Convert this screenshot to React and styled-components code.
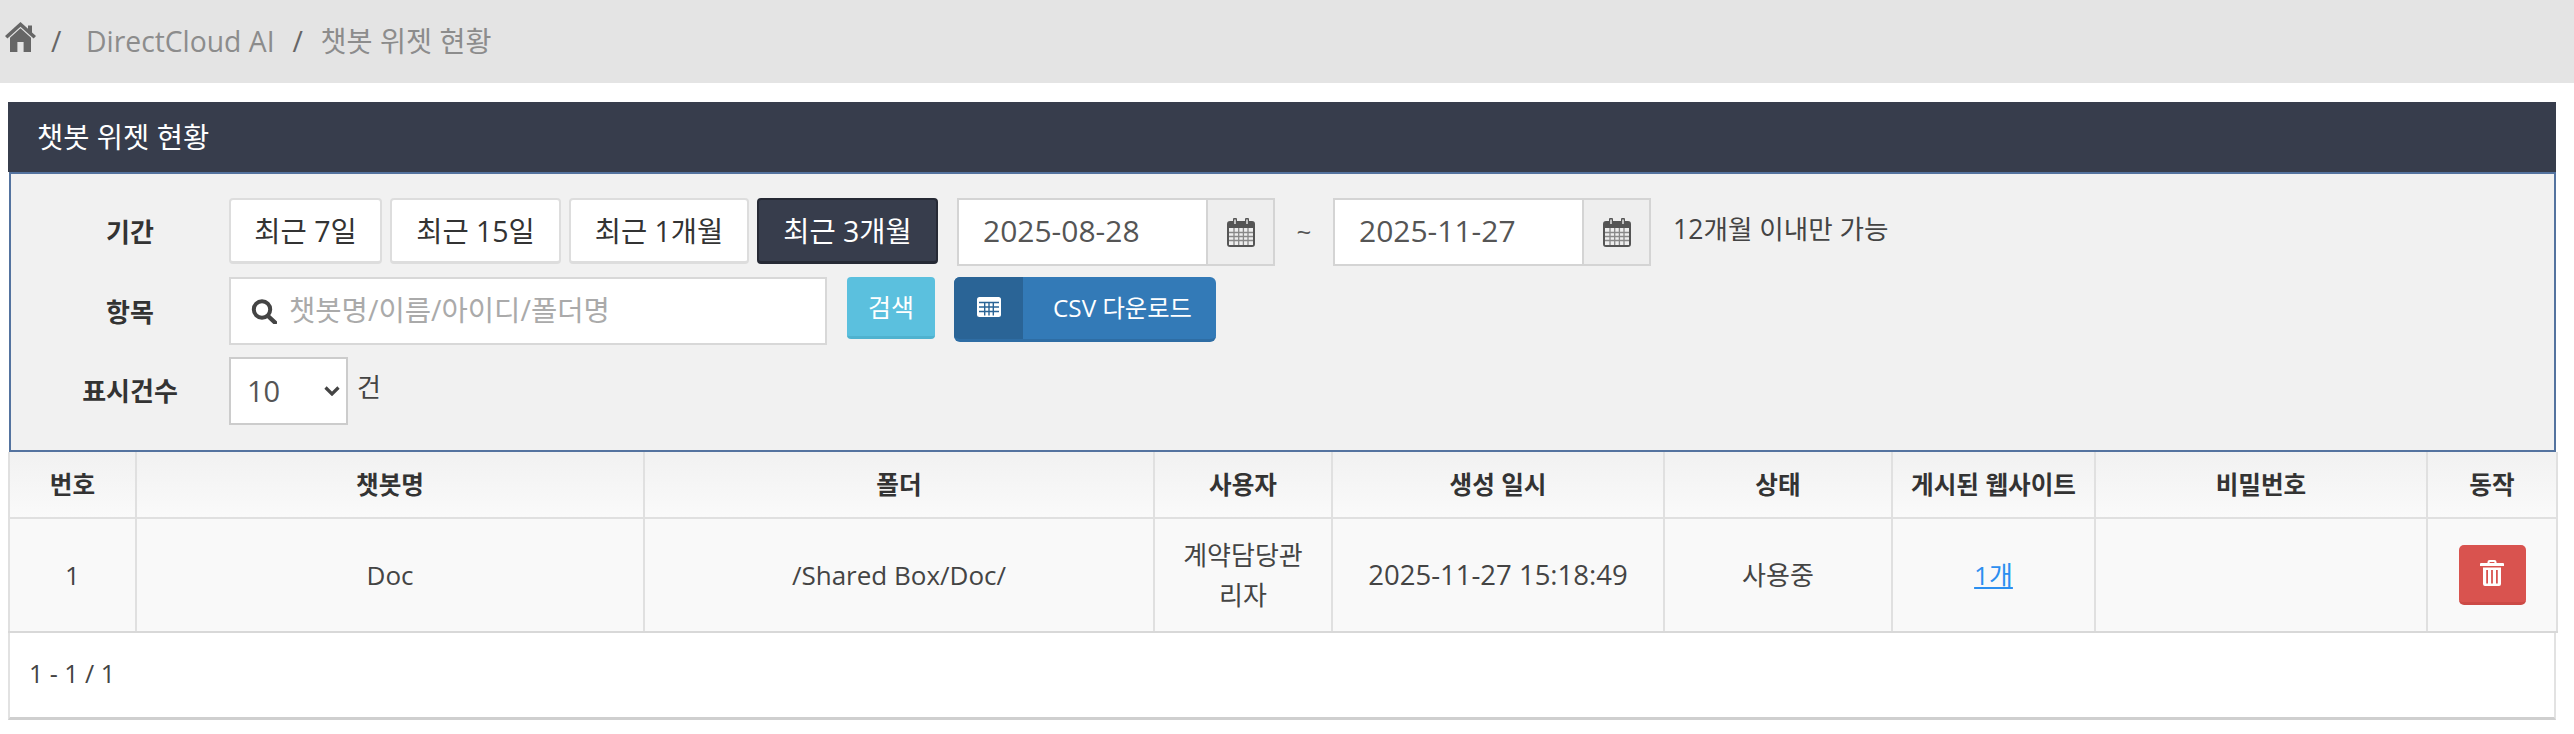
import React from "react";
import styled, { createGlobalStyle } from "styled-components";

const Global = createGlobalStyle`
  html, body { margin: 0; padding: 0; background: #fff; }
  body {
    font-family: "Open Sans", "Noto Sans CJK KR", sans-serif;
    font-size: 26px;
    line-height: 40px;
    color: #333;
  }
  * { box-sizing: border-box; }
`;

const Breadcrumb = styled.nav`
  display: flex;
  align-items: center;
  height: 83px;
  padding: 0 0 1px 5px;
  background: #e4e4e4;
  font-size: 28.3px;
  color: #8c8c8c;
`;
const HomeLink = styled.span`
  display: flex;
  width: 31px;
  margin-top: -8px;
  margin-right: 15px;
  color: #666;
`;
const Crumb = styled.span`
  color: #8c8c8c;
`;
const Slash = styled.span`
  width: 10px;
  margin: ${(p) => (p.$first ? "0 25px 0 0" : "0 18px 0 18px")};
  color: #666;
`;

const Panel = styled.section`
  margin: 19px 18px 0 8px;
`;
const PanelTitle = styled.h2`
  display: flex;
  align-items: center;
  height: 70px;
  margin: 0;
  padding: 0 0 0 29px;
  background: #373d4c;
  color: #fff;
  font-size: 28.5px;
  font-weight: 400;
`;
const SearchForm = styled.form`
  display: grid;
  grid-template-columns: 200px 1fr;
  grid-template-rows: 68px 69px 68px;
  row-gap: 11px;
  align-items: start;
  height: 280px;
  margin-left: 1px;
  padding: 24px 0 0 18px;
  background: #f1f1f1;
  border: 2px solid #54739f;
`;
const FieldLabel = styled.label`
  align-self: center;
  padding-left: 2px;
  text-align: center;
  font-size: 26px;
  font-weight: 700;
  color: #333;
`;
const Controls = styled.div`
  display: flex;
  align-items: flex-start;
`;
const RangeButton = styled.button`
  height: 66px;
  margin-right: ${(p) => p.$mr ?? 7}px;
  padding: 0;
  width: ${(p) => p.$w}px;
  font: inherit;
  font-size: 28.5px;
  color: ${(p) => (p.$active ? "#fff" : "#333")};
  background: ${(p) => (p.$active ? "#373d4c" : "#fff")};
  border: 2px solid ${(p) => (p.$active ? "#262a35" : "#ddd")};
  border-bottom-width: 3px;
  border-radius: 4px;
`;
const DateGroup = styled.div`
  display: flex;
  width: 318px;
  height: 68px;
  border: 2px solid #d4d4d4;
  background: #fff;
`;
const DateInput = styled.input`
  flex: 1;
  min-width: 0;
  padding: 0 0 2px 24px;
  border: 0;
  background: transparent;
  font: inherit;
  font-size: 30px;
  color: #555;
  outline: none;
`;
const Addon = styled.span`
  display: flex;
  align-items: center;
  justify-content: center;
  width: 67px;
  color: #555;
  background: #eee;
  border-left: 2px solid #d4d4d4;
`;
const Tilde = styled.span`
  width: 58px;
  line-height: 66px;
  text-align: center;
  font-size: 26px;
  color: #555;
`;
const Hint = styled.span`
  margin-left: 22px;
  line-height: 62px;
  font-size: 26.6px;
  color: #444;
`;
const SearchBox = styled.div`
  display: flex;
  align-items: center;
  width: 598px;
  height: 68px;
  padding-left: 20px;
  margin-right: 20px;
  background: #fff;
  border: 2px solid #d8d8d8;
`;
const SearchInput = styled.input`
  flex: 1;
  min-width: 0;
  margin-left: 12px;
  padding: 0 0 2px;
  border: 0;
  background: transparent;
  font: inherit;
  font-size: 28.6px;
  outline: none;
  &::placeholder { color: #aaa; opacity: 1; }
`;
const SearchButton = styled.button`
  width: 88px;
  height: 62px;
  margin-right: 19px;
  padding: 0;
  font: inherit;
  font-size: 25px;
  color: #fff;
  background: #5bc0de;
  border: 0;
  border-bottom: 3px solid #4fb2cf;
  border-radius: 4px;
`;
const CsvButton = styled.button`
  display: flex;
  align-items: stretch;
  width: 262px;
  height: 65px;
  padding: 0;
  font: inherit;
  font-size: 24.3px;
  color: #fff;
  background: #337ab7;
  border: 0;
  border-bottom: 3px solid #2e6da4;
  border-radius: 6px;
  overflow: hidden;
`;
const CsvIcon = styled.span`
  display: flex;
  align-items: center;
  justify-content: center;
  width: 69px;
  padding-bottom: 3px;
  background: #2a6496;
`;
const CsvLabel = styled.span`
  flex: 1;
  padding-left: 30px;
  text-align: left;
  line-height: 62px;
`;
const SelectWrap = styled.span`
  position: relative;
  display: block;
  width: 119px;
  height: 68px;
`;
const SizeSelect = styled.select`
  appearance: none;
  display: block;
  width: 100%;
  height: 100%;
  padding: 0 0 0 16px;
  font: inherit;
  font-size: 29px;
  color: #555;
  background: #fff;
  border: 2px solid #ccc;
  border-radius: 0;
  outline: none;
`;
const SelectArrow = styled.svg`
  position: absolute;
  top: 29px;
  right: 8px;
  pointer-events: none;
`;
const Unit = styled.span`
  margin-left: 9px;
  line-height: 60px;
  font-size: 26px;
  color: #444;
`;

const Table = styled.table`
  width: 2548px;
  border-collapse: collapse;
  table-layout: fixed;
`;
const Th = styled.th`
  width: ${(p) => p.$w}px;
  height: 66px;
  padding: 0 4px;
  font-size: 24.6px;
  font-weight: 700;
  color: #333;
  text-align: center;
  background: linear-gradient(#f1f1f1, #fafafa);
  border: 2px solid #e0e0e0;
  border-top: 0;
`;
const Td = styled.td`
  height: 112px;
  padding: 16px 20px;
  font-size: 26px;
  text-align: center;
  color: #444;
  background: #f9f9f9;
  border: 2px solid #e0e0e0;
  border-bottom-color: #d8d8d8;
`;
const DateCell = styled(Td)`
  font-size: 27.5px;
  padding: 16px 0;
`;
const CountLink = styled.a`
  color: #2c8ff0;
  text-decoration: underline;
`;
const DeleteButton = styled.button`
  display: inline-flex;
  align-items: center;
  justify-content: center;
  width: 67px;
  height: 60px;
  padding: 0 0 2px;
  vertical-align: middle;
  background: #d9534f;
  border: 0;
  border-bottom: 3px solid #cc4a46;
  border-radius: 5px;
`;
const TableFooter = styled.div`
  display: flex;
  align-items: center;
  width: 2548px;
  height: 87px;
  padding: 0 0 4px 19px;
  font-size: 25px;
  color: #444;
  background: #fff;
  border: 2px solid #e2e2e2;
  border-top: 0;
  border-bottom: 3px solid #cfcfcf;
`;

const HomeIcon = () => (
  <svg width="31" height="30" viewBox="0 0 31 30" fill="currentColor">
    <path d="M15.5 0 L23 6.8 V3.5 H27 V10.4 L31 14 L28.6 16.6 L15.5 4.8 L2.4 16.6 L0 14 Z" />
    <path d="M15.5 6.2 L26 15.8 V30 H18.6 V20 H12.4 V30 H5 V15.8 Z" />
  </svg>
);
const CalendarIcon = () => (
  <svg width="28" height="29" viewBox="0 0 28 29">
    <path fill="#555" fillRule="evenodd" d="M3 3 H6 V1.5 a2 2 0 0 1 4 0 V3 H18 V1.5 a2 2 0 0 1 4 0 V3 H25 a3 3 0 0 1 3 3 V26 a3 3 0 0 1 -3 3 H3 a3 3 0 0 1 -3 -3 V6 a3 3 0 0 1 3 -3 Z M2 10 V27 H26 V10 Z" />
    <path stroke="#888" strokeWidth="1.3" fill="none" d="M2 14.5 H26 M2 18.5 H26 M2 22.5 H26 M7 10 V27 M11.7 10 V27 M16.4 10 V27 M21 10 V27" />
    <path stroke="#eee" strokeWidth="1.4" fill="none" d="M8 1.5 V6 M20 1.5 V6" />
  </svg>
);
const SearchIcon = () => (
  <svg width="26" height="25" viewBox="0 0 26 25" fill="none" stroke="#444">
    <circle cx="11" cy="10.5" r="8.2" strokeWidth="4" />
    <path d="M17 17 L24 23.5" strokeWidth="4.4" strokeLinecap="round" />
  </svg>
);
const TableIcon = () => (
  <svg width="24" height="20" viewBox="0 0 24 20">
    <rect width="24" height="20" rx="2.5" fill="#fff" />
    <path stroke="#2a6496" strokeWidth="1.4" fill="none" d="M2 5.5 H22 M2 10 H22 M2 14.5 H22 M7.7 5.5 V18.5 M12 5.5 V18.5 M16.3 5.5 V18.5" />
  </svg>
);
const TrashIcon = () => (
  <svg width="24" height="26" viewBox="0 0 24 26" fill="#fff">
    <path fillRule="evenodd" d="M7.5 3 V2 a2 2 0 0 1 2 -2 H14.5 a2 2 0 0 1 2 2 V3 H23 a1 1 0 0 1 1 1 V6 H0 V4 a1 1 0 0 1 1 -1 Z M9.6 3 H14.4 V2 H9.6 Z" />
    <path fillRule="evenodd" d="M3 7.5 H21 V24 a2 2 0 0 1 -2 2 H5 a2 2 0 0 1 -2 -2 Z M6.2 10 V23.5 H8 V10 Z M11.1 10 V23.5 H12.9 V10 Z M16 10 V23.5 H17.8 V10 Z" />
  </svg>
);

const ranges = [
  { label: "최근 7일", w: 153 },
  { label: "최근 15일", w: 171 },
  { label: "최근 1개월", w: 180 },
  { label: "최근 3개월", w: 181, active: true },
];
const columns = [
  ["번호", 127], ["챗봇명", 508], ["폴더", 510], ["사용자", 178], ["생성 일시", 332],
  ["상태", 228], ["게시된 웹사이트", 203], ["비밀번호", 332], ["동작", 130],
];

export default function App() {
  return (
    <>
      <Global />
      <Breadcrumb>
        <HomeLink><HomeIcon /></HomeLink>
        <Slash $first>/</Slash>
        <Crumb>DirectCloud AI</Crumb>
        <Slash>/</Slash>
        <Crumb>챗봇 위젯 현황</Crumb>
      </Breadcrumb>
      <Panel>
        <PanelTitle>챗봇 위젯 현황</PanelTitle>
        <SearchForm onSubmit={(e) => e.preventDefault()}>
          <FieldLabel>기간</FieldLabel>
          <Controls>
            {ranges.map((r, i) => (
              <RangeButton key={r.label} type="button" $w={r.w} $active={r.active} $mr={i === 3 ? 19 : 8}>{r.label}</RangeButton>
            ))}
            <DateGroup>
              <DateInput defaultValue="2025-08-28" />
              <Addon><CalendarIcon /></Addon>
            </DateGroup>
            <Tilde>~</Tilde>
            <DateGroup>
              <DateInput defaultValue="2025-11-27" />
              <Addon><CalendarIcon /></Addon>
            </DateGroup>
            <Hint>12개월 이내만 가능</Hint>
          </Controls>
          <FieldLabel>항목</FieldLabel>
          <Controls>
            <SearchBox>
              <SearchIcon />
              <SearchInput placeholder="챗봇명/이름/아이디/폴더명" />
            </SearchBox>
            <SearchButton type="button">검색</SearchButton>
            <CsvButton type="button">
              <CsvIcon><TableIcon /></CsvIcon>
              <CsvLabel>CSV 다운로드</CsvLabel>
            </CsvButton>
          </Controls>
          <FieldLabel>표시건수</FieldLabel>
          <Controls>
            <SelectWrap>
              <SizeSelect defaultValue="10">
                <option>10</option>
                <option>20</option>
                <option>50</option>
              </SizeSelect>
              <SelectArrow width="16" height="10" viewBox="0 0 16 10" fill="none" stroke="#444" strokeWidth="3.2" aria-hidden="true">
                <path d="M1.5 1.5 L8 8 L14.5 1.5" />
              </SelectArrow>
            </SelectWrap>
            <Unit>건</Unit>
          </Controls>
        </SearchForm>
        <Table>
          <thead>
            <tr>{columns.map(([name, w]) => <Th key={name} $w={w}>{name}</Th>)}</tr>
          </thead>
          <tbody>
            <tr>
              <Td>1</Td>
              <Td>Doc</Td>
              <Td>/Shared Box/Doc/</Td>
              <Td>계약담당관리자</Td>
              <DateCell>2025-11-27 15:18:49</DateCell>
              <Td>사용중</Td>
              <Td><CountLink href="#">1개</CountLink></Td>
              <Td />
              <Td><DeleteButton type="button" aria-label="삭제"><TrashIcon /></DeleteButton></Td>
            </tr>
          </tbody>
        </Table>
        <TableFooter>1 - 1 / 1</TableFooter>
      </Panel>
    </>
  );
}
